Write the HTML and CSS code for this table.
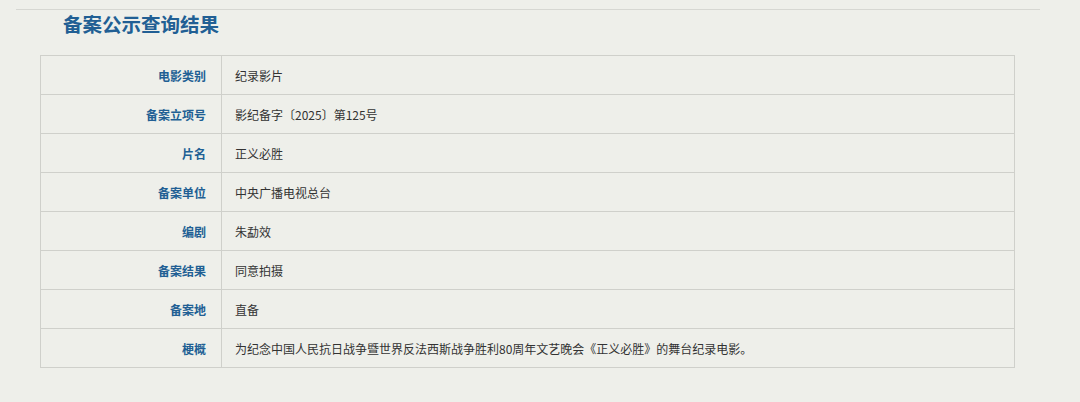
FILE: index.html
```html
<!DOCTYPE html>
<html lang="zh-CN">
<head>
    <meta charset="UTF-8">
    <title>备案公示查询结果</title>
    <link rel="stylesheet" href="styles.css">
</head>
<body>
<div class="topline"></div>
<h2 class="title">备案公示查询结果</h2>

<table class="result">
    <tr><th>电影类别</th><td>纪录影片</td></tr>
    <tr><th>备案立项号</th><td>影纪备字〔2025〕第125号</td></tr>
    <tr><th>片名</th><td>正义必胜</td></tr>
    <tr><th>备案单位</th><td>中央广播电视总台</td></tr>
    <tr><th>编剧</th><td>朱勐效</td></tr>
    <tr><th>备案结果</th><td>同意拍摄</td></tr>
    <tr><th>备案地</th><td>直备</td></tr>
    <tr><th>梗概</th><td>为纪念中国人民抗日战争暨世界反法西斯战争胜利80周年文艺晚会《正义必胜》的舞台纪录电影。</td></tr>
</table>
</body>
</html>
```

FILE: styles.css
```css
body {
    margin: 0;
    background: #eeefea;
    font-family: "Noto Sans CJK SC", "Liberation Sans", sans-serif;
    font-size: 12px;
    color: #333;
}

.topline {
    margin: 0 40px 0 16px;
    height: 9px;
    border-bottom: 1px solid #d6d7d2;
}

.title {
    margin: 0;
    padding-left: 63px;
    height: 45px;
    line-height: 28px;
    font-size: 19.5px;
    font-weight: bold;
    color: #215f94;
}

/* result table */
.result {
    margin-left: 40px;
    width: 975px;
    border-collapse: collapse;
}
.result th,
.result td {
    height: 39px;
    padding: 0;
    border: 1px solid #cfd0cb;
    box-sizing: border-box;
}
.result th {
    width: 181px;
    padding-right: 15px;
    text-align: right;
    font-weight: bold;
    color: #215f94;
}
.result td {
    padding-left: 13px;
    text-align: left;
}
```
